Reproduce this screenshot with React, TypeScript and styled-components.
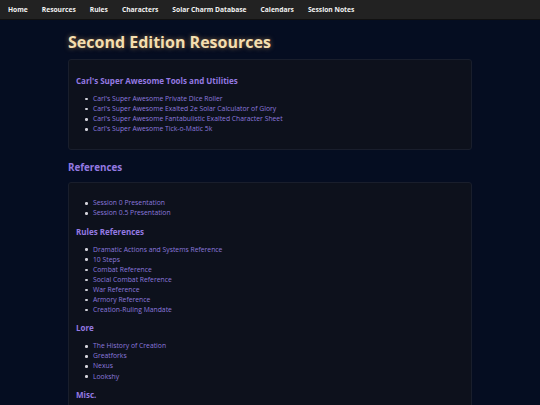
import React from "react";
import styled, { createGlobalStyle } from "styled-components";

const Global = createGlobalStyle`
  html, body { margin: 0; padding: 0; }
  body {
    background: #050d21;
    font-family: "Open Sans", "Noto Sans", sans-serif;
    font-size: 7px;
    color: #c8c8d0;
  }
`;

const Nav = styled.nav`
  height: 20px;
  background: #222222;
  display: flex;
  align-items: center;
  gap: 14px;
  padding: 0 8px;
  border-bottom: 1px solid #111;
  box-sizing: border-box;
`;

const NavItem = styled.a`
  color: #f2f2f2;
  font-weight: 700;
  font-size: 6.7px;
  text-decoration: none;
`;

const Container = styled.main`
  width: 404px;
  margin: 0 auto;
`;

const Title = styled.h1`
  margin: 12px 0 7px;
  font-size: 16px;
  line-height: 20px;
  font-weight: 700;
  color: #f4deaf;
  text-shadow: 0 0 5px rgba(255, 196, 110, 0.5);
`;

const SectionTitle = styled.h2`
  margin: 11px 0 8px;
  font-size: 9.8px;
  line-height: 13px;
  font-weight: 700;
  color: #9479e2;
`;

const Card = styled.section`
  background: #0d111c;
  border: 1px solid #191e2c;
  border-radius: 3px;
  padding: 0 7px;
  overflow: hidden;
`;

const SubTitle = styled.h3`
  margin: 8px 0 8px;
  font-size: 8px;
  line-height: 10px;
  font-weight: 700;
  color: #9479e2;
`;

const List = styled.ul`
  margin: 7px 0;
  padding-left: 9px;
  list-style: none;
`;

const Item = styled.li`
  display: flex;
  align-items: center;
  line-height: 10.1px;
  font-size: 6.8px;
  &::before {
    content: "";
    width: 2.6px;
    height: 2.6px;
    border-radius: 50%;
    background: #d0d0d8;
    margin-right: 5.4px;
    flex: none;
  }
`;

const Link = styled.a`
  color: #8b78dc;
  text-decoration: none;
`;

const Pad = styled.div`
  height: 8px;
`;

const navItems = [
  "Home",
  "Resources",
  "Rules",
  "Characters",
  "Solar Charm Database",
  "Calendars",
  "Session Notes",
];

const tools = [
  "Carl's Super Awesome Private Dice Roller",
  "Carl's Super Awesome Exalted 2e Solar Calculator of Glory",
  "Carl's Super Awesome Fantabulistic Exalted Character Sheet",
  "Carl's Super Awesome Tick-o-Matic 5k",
];

const groups: { title?: string; items: string[] }[] = [
  { items: ["Session 0 Presentation", "Session 0.5 Presentation"] },
  {
    title: "Rules References",
    items: [
      "Dramatic Actions and Systems Reference",
      "10 Steps",
      "Combat Reference",
      "Social Combat Reference",
      "War Reference",
      "Armory Reference",
      "Creation-Ruling Mandate",
    ],
  },
  {
    title: "Lore",
    items: ["The History of Creation", "Greatforks", "Nexus", "Lookshy"],
  },
  { title: "Misc.", items: ["Exalted Wiki", "Glossary"] },
];

const Links = ({ items }: { items: string[] }) => (
  <List>
    {items.map((t) => (
      <Item key={t}>
        <Link href="#">{t}</Link>
      </Item>
    ))}
  </List>
);

export default function App() {
  return (
    <>
      <Global />
      <Nav>
        {navItems.map((n) => (
          <NavItem key={n} href="#">
            {n}
          </NavItem>
        ))}
      </Nav>
      <Container>
        <Title>Second Edition Resources</Title>
        <Card>
          <Pad />
          <SubTitle>Carl's Super Awesome Tools and Utilities</SubTitle>
          <Links items={tools} />
          <Pad />
        </Card>
        <SectionTitle>References</SectionTitle>
        <Card>
          <Pad />
          {groups.map((g, i) => (
            <React.Fragment key={i}>
              {g.title && <SubTitle>{g.title}</SubTitle>}
              <Links items={g.items} />
            </React.Fragment>
          ))}
          <Pad />
        </Card>
      </Container>
    </>
  );
}
